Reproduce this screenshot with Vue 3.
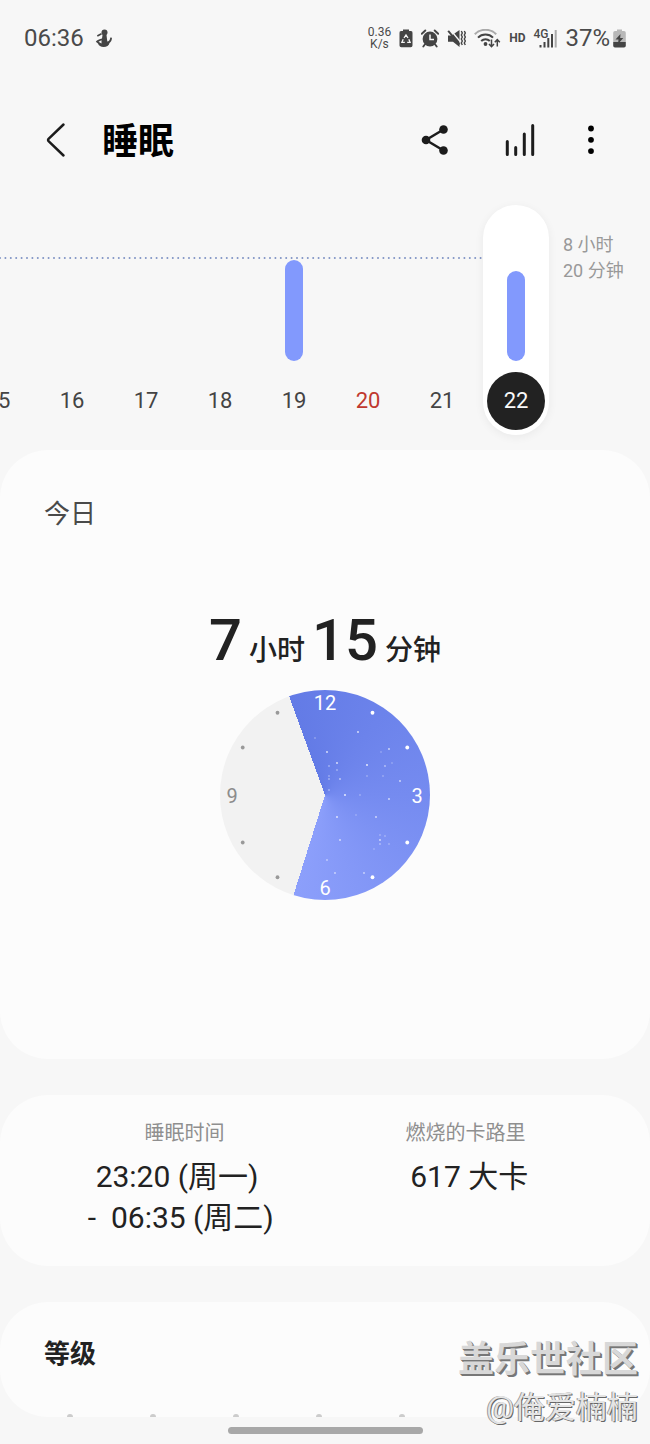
<script setup>
import { ref, computed } from "vue";

const days = [
  { day: 15, bar: 0 },
  { day: 16, bar: 0 },
  { day: 17, bar: 0 },
  { day: 18, bar: 0 },
  { day: 19, bar: 101 },
  { day: 20, bar: 0, sunday: true },
  { day: 21, bar: 0 },
  { day: 22, bar: 90 },
];
const selected = ref(22);

// 12 hour dial, one hour is 30 degrees
const sleepStart = -20;
const sleepEnd = 197.5;

const dialStyle = computed(() => {
  const sweep = sleepEnd - sleepStart;
  return {
    backgroundImage: `conic-gradient(from ${sleepStart}deg, #637be6 0deg, #758bf0 110deg, #8c9ffb ${sweep}deg, #f2f2f2 ${sweep}deg)`,
  };
});

const ticks = [1, 2, 4, 5, 7, 8, 10, 11].map((hour) => {
  const angle = (hour * Math.PI) / 6;
  return {
    hour,
    x: 105 + 95 * Math.sin(angle),
    y: 105 - 95 * Math.cos(angle),
    asleep: hour < 6,
  };
});

// x, y, opacity
const stars = [
  [138, 42, 0.8],
  [95, 48, 0.3],
  [107, 62, 0.8],
  [169, 59, 0.7],
  [161, 62, 0.25],
  [117, 73, 0.8],
  [109, 76, 0.4],
  [147, 75, 0.9],
  [165, 76, 0.5],
  [172, 73, 0.25],
  [117, 80, 0.4],
  [109, 86, 0.35],
  [147, 86, 0.3],
  [163, 86, 0.3],
  [109, 89, 0.4],
  [120, 89, 0.6],
  [180, 91, 0.7],
  [109, 100, 0.4],
  [125, 105, 0.9],
  [140, 105, 0.3],
  [169, 109, 0.7],
  [117, 127, 0.8],
  [136, 125, 0.25],
  [156, 127, 0.7],
  [160, 145, 0.3],
  [165, 146, 0.3],
  [120, 150, 0.7],
  [160, 150, 0.7],
  [160, 154, 0.4],
  [169, 154, 0.3],
  [154, 159, 0.25],
  [107, 170, 0.5],
  [115, 183, 0.6],
  [144, 183, 0.6],
];
</script>

<template>
  <div class="page">
    <div class="status">
      <span class="time">06:36</span>
      <svg class="notice" width="18" height="19" viewBox="0 0 18 19">
        <circle cx="9.500" cy="3.500" r="3" fill="#444" />
        <path
          d="M7.500 6h4l.8 6.500c1.500 0 2.700-1.500 3-4l1.700.3c-.2 2.500-1 4.200-2.500 5.200-.5 2.500-2.800 4-5.800 4-3 0-5-1.500-5.700-3.500L.8 12.800C2 11 4.500 10.200 7 9.500z"
          fill="#444"
        />
        <path d="M2.300 7L6.500 4.800" stroke="#444" stroke-width="1.600" />
        <path d="M3.500 12.700l3-1.500v3.300z" fill="#f7f7f7" />
      </svg>
      <div class="indicators">
        <span class="speed">0.36<br />K/s</span>
        <svg width="14" height="19" viewBox="0 0 14 19">
          <path
            d="M4 2V.5h6V2h1.500A1.800 1.800 0 0 1 13.500 4v12.500a1.800 1.800 0 0 1-1.800 1.800H2.300a1.800 1.800 0 0 1-1.800-1.800V4A1.800 1.800 0 0 1 2.500 2z"
            fill="#444"
          />
          <path
            d="M5 9L7 6l2 3M9.800 10.200l1.300 3.100H8.200M5.800 13.300H2.900l1.300-3.100"
            fill="none"
            stroke="#f7f7f7"
            stroke-width="1.300"
          />
        </svg>
        <svg width="18" height="19" viewBox="0 0 18 19">
          <circle cx="9" cy="10" r="7.400" fill="#444" />
          <path
            d="M.8 4.800L4.300 1.500M17.200 4.800L13.700 1.500M3.800 15.500l-1.500 2M14.200 15.500l1.500 2"
            stroke="#444"
            stroke-width="1.900"
            stroke-linecap="round"
          />
          <path d="M9 5.500v5h4" fill="none" stroke="#f7f7f7" stroke-width="1.500" />
        </svg>
        <svg width="19" height="19" viewBox="0 0 19 19">
          <path d="M1 6.500h3.500L12.500 1v17L6 12.700H1z" fill="#444" />
          <path d="M4 1.500L13.500 13" stroke="#f7f7f7" stroke-width="1.300" />
          <path d="M1.200 1.800L12.500 15.500" stroke="#444" stroke-width="1.900" />
          <path
            d="M14.300 2l1 2-1 2 1 2-1 2 1 2-1 2 1 2M17.300 2l1 2-1 2 1 2-1 2 1 2-1 2 1 2"
            fill="none"
            stroke="#444"
            stroke-width="1.400"
          />
        </svg>
        <svg width="27" height="19" viewBox="0 0 27 19">
          <g fill="none" stroke="#444" stroke-width="2">
            <path d="M.8 5.200C6.500-.7 16.500-.7 22.200 5.200" stroke="#aaa" />
            <path d="M4 8.600c4-4.200 11-4.200 15 0" />
            <path d="M7.200 12c2.500-2.500 6.200-2.500 8.600 0" />
          </g>
          <circle cx="11.500" cy="15" r="1.900" fill="#444" />
          <path
            d="M17.500 10.500v7M15 15l2.500 2.700L20 15M23.300 17.500V11M20.800 13.300l2.500-2.700 2.500 2.700"
            fill="none"
            stroke="#444"
            stroke-width="1.500"
          />
        </svg>
        <span class="hd">HD</span>
        <span class="network">
          <span class="generation">4G</span>
          <svg width="18" height="19" viewBox="0 0 18 19">
            <path d="M1.500 16v2.500M5.500 13v5.500M9.300 9v9.500M13 5v13.500" stroke="#444" stroke-width="2" />
            <path d="M16.700 1v17.500" stroke="#aaa" stroke-width="2" />
          </svg>
        </span>
        <span class="percent">37%</span>
        <svg class="battery" width="13" height="19" viewBox="0 0 13 19">
          <path
            d="M4 2V.5h5V2h2a1.800 1.800 0 0 1 1.800 1.800V13H.2V3.800A1.800 1.800 0 0 1 2 2z"
            fill="#b8b8b8"
          />
          <path d="M.2 13h12.600v3.700a1.800 1.800 0 0 1-1.800 1.800H2a1.800 1.800 0 0 1-1.800-1.800z" fill="#444" />
          <path d="M7.500 5L2.500 10.500h3L5 15l5.300-6H7.200z" fill="#444" />
        </svg>
      </div>
    </div>

    <header class="header">
      <button class="back" type="button" aria-label="返回">
        <svg width="20" height="36" viewBox="0 0 20 36">
          <path
            d="M17.500 2.500L2.800 16.600q-1.500 1.400 0 2.800L17.500 33.500"
            fill="none"
            stroke="#1c1c1c"
            stroke-width="2.500"
            stroke-linecap="round"
          />
        </svg>
      </button>
      <h1>睡眠</h1>
      <button class="action" type="button" aria-label="分享">
        <svg width="28" height="30" viewBox="0 0 28 30">
          <path d="M22.500 4.500L5 15l17.500 10.500" fill="none" stroke="#1c1c1c" stroke-width="2.500" />
          <circle cx="22.500" cy="4.500" r="4.300" fill="#1c1c1c" />
          <circle cx="5" cy="15" r="4.300" fill="#1c1c1c" />
          <circle cx="22.500" cy="25.500" r="4.300" fill="#1c1c1c" />
        </svg>
      </button>
      <button class="action" type="button" aria-label="趋势">
        <svg width="30" height="34" viewBox="0 0 30 34">
          <path
            d="M2.300 18.500v13M10.700 24.500v7M19.300 11v20.500M27.700 2.500v29"
            stroke="#1c1c1c"
            stroke-width="3"
            stroke-linecap="round"
          />
        </svg>
      </button>
      <button class="action more" type="button" aria-label="更多选项">
        <svg width="6" height="30" viewBox="0 0 6 30">
          <circle cx="3" cy="3.500" r="2.900" />
          <circle cx="3" cy="14.800" r="2.900" />
          <circle cx="3" cy="26.100" r="2.900" />
        </svg>
      </button>
    </header>

    <section class="history">
      <div class="track">
        <div class="target">
          <svg height="4" width="100%">
            <line x1="0" y1="2" x2="100%" y2="2" />
          </svg>
        </div>
        <button
          v-for="item in days"
          :key="item.day"
          type="button"
          class="day"
          :class="{ selected: item.day === selected, sunday: item.sunday }"
          @click="selected = item.day"
        >
          <span class="bar" v-if="item.bar" :style="{ height: item.bar + 'px' }"></span>
          <span class="date">{{ item.day }}</span>
        </button>
      </div>
      <p class="goal">8 小时<br />20 分钟</p>
    </section>

    <main>
      <section class="card today">
        <h2>今日</h2>
        <p class="total"><b>7</b> 小时 <b>15</b> 分钟</p>
        <div class="dial" :style="dialStyle">
          <svg viewBox="0 0 210 210">
            <circle
              v-for="(star, index) in stars"
              :key="index"
              :cx="star[0]"
              :cy="star[1]"
              r="0.9"
              fill="#fff"
              :opacity="star[2]"
            />
            <circle
              v-for="tick in ticks"
              :key="tick.hour"
              :cx="tick.x"
              :cy="tick.y"
              r="1.9"
              :fill="tick.asleep ? '#fff' : '#999'"
            />
            <text x="105" y="20">12</text>
            <text x="197" y="113">3</text>
            <text x="105" y="205">6</text>
            <text x="12" y="113" class="awake">9</text>
          </svg>
        </div>
      </section>

      <dl class="card facts">
        <div>
          <dt>睡眠时间</dt>
          <dd>23:20 (周一)&nbsp;&nbsp;<br />-&nbsp; 06:35 (周二)&nbsp;</dd>
        </div>
        <div>
          <dt>燃烧的卡路里</dt>
          <dd>&nbsp;617 大卡</dd>
        </div>
      </dl>

      <section class="card stages">
        <h2>等级</h2>
        <div class="points">
          <i v-for="n in 5" :key="n"></i>
        </div>
      </section>
    </main>

    <div class="gesture"><span></span></div>

    <div class="watermark">
      <strong>盖乐世社区</strong>
      <span>@俺爱楠楠</span>
    </div>
  </div>
</template>

<style>
body {
  margin: 0;
  background: #f7f7f7;
}
</style>

<style scoped>
.page {
  position: relative;
  overflow: hidden;
  background: #f7f7f7;
  color: #222;
  font-family: Roboto, "Noto Sans CJK SC", sans-serif;
}

h1,
h2,
p,
dl,
dd {
  margin: 0;
}

button {
  border: 0;
  padding: 0;
  background: none;
  color: inherit;
  font: inherit;
  cursor: pointer;
}

svg {
  display: block;
}

.status {
  display: flex;
  align-items: center;
  height: 76px;
  padding: 0 24px;
  color: #4a4a4a;
}

.time,
.percent {
  font-size: 24px;
  line-height: 28px;
}

.notice {
  margin-left: 11px;
}

.indicators {
  display: flex;
  align-items: center;
  gap: 8px;
  margin-left: auto;
}

.speed {
  font-size: 12px;
  line-height: 12px;
  text-align: center;
}

.hd {
  font-size: 12px;
  font-weight: 700;
}

.network {
  display: flex;
}

.generation {
  margin-right: -9px;
  font-size: 12px;
  line-height: 10px;
  font-weight: 500;
}

.battery {
  margin-left: -5px;
}

.header {
  display: flex;
  align-items: center;
  height: 128px;
  padding: 0 31px 0 32px;
}

.back,
.action {
  display: flex;
  align-items: center;
  justify-content: center;
  height: 48px;
}

.back {
  width: 48px;
}

.header h1 {
  flex: 1;
  margin-left: 22px;
  padding-top: 4px;
  font-size: 36px;
  line-height: 48px;
  font-weight: 700;
  color: #000;
}

.action {
  width: 85px;
}

.more {
  width: 57px;
}

.history {
  display: flex;
  height: 246px;
}

.track {
  position: relative;
  flex: 1;
  min-width: 0;
  display: flex;
  justify-content: flex-end;
}

.target {
  position: absolute;
  top: 52px;
  left: 0;
  right: 8px;
}

.target line {
  stroke: #7f93c4;
  stroke-width: 2;
  stroke-linecap: round;
  stroke-dasharray: 0 5.4;
}

.day {
  position: relative;
  flex: 0 0 66px;
  display: flex;
  flex-direction: column;
  align-items: center;
  justify-content: flex-end;
  gap: 11px;
  height: 230px;
  margin: 1px 4px 0;
  padding-bottom: 5px;
  border-radius: 33px;
  font-size: 22px;
  color: #444;
}

.bar {
  width: 18px;
  border-radius: 9px;
  background: #8299fd;
}

.date {
  width: 58px;
  border-radius: 50%;
  line-height: 58px;
}

.sunday {
  color: #c0392f;
}

.selected {
  background: #fff;
  box-shadow: 0 2px 10px rgba(0, 0, 0, 0.06);
}

.selected .date {
  background: #222;
  color: #fafafa;
}

.goal {
  width: 87px;
  padding: 28px 0 0 10px;
  font-size: 18px;
  line-height: 26px;
  color: #999;
}

main {
  display: flex;
  flex-direction: column;
  gap: 36px;
}

.card {
  border-radius: 48px;
  padding: 0 44px;
  background: #fcfcfc;
}

.card h2 {
  font-size: 26px;
  line-height: 36px;
}

.today {
  padding-top: 46px;
  padding-bottom: 159px;
}

.today h2 {
  font-weight: 400;
  color: #4a4a4a;
}

.total {
  margin-top: 72px;
  text-align: center;
  font-size: 28px;
  line-height: 72px;
  font-weight: 500;
}

.total b {
  font-size: 58px;
  font-weight: 500;
}

.dial {
  width: 210px;
  height: 210px;
  margin: 3px auto 0;
  border-radius: 50%;
}

.dial text {
  fill: #fff;
  font-size: 20px;
  text-anchor: middle;
}

.dial .awake {
  fill: #8c8c8c;
}

.facts {
  display: flex;
  padding-top: 23px;
  padding-bottom: 28px;
}

.facts div {
  flex: 1;
  text-align: center;
}

.facts dt {
  font-size: 20px;
  line-height: 30px;
  color: #8f8f8f;
}

.facts dd {
  margin-top: 8px;
  font-size: 30px;
  line-height: 41px;
}

.stages {
  padding-top: 34px;
}

.stages h2 {
  font-weight: 700;
}

.points {
  display: flex;
  gap: 77px;
  height: 3px;
  margin-top: 42px;
  padding-left: 23px;
  overflow: hidden;
}

.points i {
  width: 6px;
  height: 6px;
  border-radius: 50%;
  background: #ccc;
}

.gesture {
  display: flex;
  justify-content: center;
  padding: 10px 0;
}

.gesture span {
  width: 30%;
  height: 7px;
  border-radius: 4px;
  background: #a8a8a8;
}

.watermark {
  position: absolute;
  right: 12px;
  bottom: 12px;
  display: flex;
  flex-direction: column;
  align-items: flex-end;
  line-height: 48px;
}

.watermark strong {
  font-size: 36px;
  font-weight: 700;
  color: #d8d8d8;
  text-shadow: 1px 1px #777, 2px 2px #777;
}

.watermark span {
  font-size: 31px;
  font-weight: 400;
  color: #e4e4e4;
  text-shadow: 1px 1px #666, -1px 0 #999;
}
</style>
